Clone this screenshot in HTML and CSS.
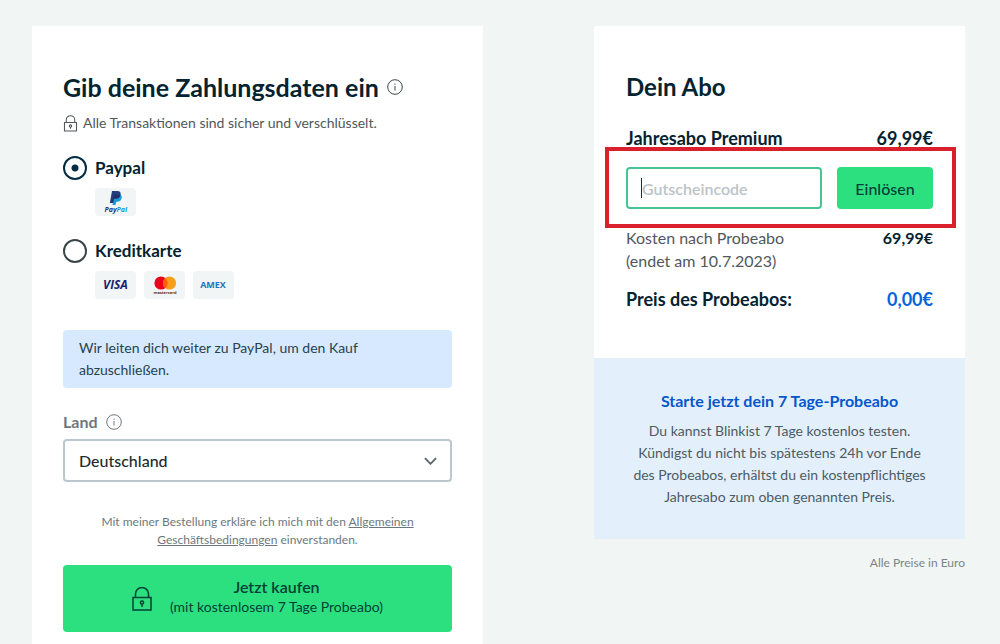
FILE: index.html
```html
<!DOCTYPE html>
<html lang="de">
<head>
<meta charset="utf-8">
<meta name="viewport" content="width=device-width, initial-scale=1">
<title>Zahlungsdaten</title>
<link rel="stylesheet" href="styles.css">
</head>
<body>
<main class="checkout">
  <form class="card payment">
    <h1 class="title title-main">Gib deine Zahlungsdaten ein
      <svg class="info" viewBox="0 0 16 16" aria-hidden="true"><circle cx="8" cy="8" r="7.3"/><path d="M8 7v4.5M8 4.6v1.2"/></svg>
    </h1>
    <p class="secure">
      <svg class="lock" viewBox="0 0 20 24" aria-hidden="true"><path d="M1.5 10.500h17v12h-17zM4 10.500V7a6 6 0 0 1 12 0v3.500"/><circle cx="10" cy="15.500" r="1.600"/><path d="M10 17v2.500"/></svg>
      Alle Transaktionen sind sicher und verschlüsselt.
    </p>

    <div class="method">
      <input class="radio" type="radio" name="method" id="paypal" checked>
      <label class="method-label" for="paypal">Paypal</label>
      <div class="badges">
        <span class="badge">
          <svg class="badge-art" viewBox="0 0 41 28" role="img" aria-label="PayPal">
            <path fill="#179bd7" d="M19 6.500h6.200c1.600.8 1.800 2.400 1.300 4-.6 2.200-2.100 3.200-4.200 3.200h-1l-.8 3.300h-3z"/>
            <path fill="#253b80" d="M17 3h5.200c2.800 0 4 1.500 3.300 4-.6 2.600-2.400 3.600-4.800 3.600h-1.800L17.900 15h-3.100z"/>
            <path fill="#222d65" d="M18.800 6.900h6.600c-.7 2.500-2.400 3.700-4.700 3.700h-1.800l-.9 4.400h-.8z"/>
            <text class="logo-paypal" x="9.500" y="23.500">Pay<tspan class="logo-pal">Pal</tspan></text>
          </svg>
        </span>
      </div>
    </div>

    <div class="method">
      <input class="radio" type="radio" name="method" id="card">
      <label class="method-label" for="card">Kreditkarte</label>
      <div class="badges">
        <span class="badge">
          <svg class="badge-art" viewBox="0 0 41 28" role="img" aria-label="Visa"><text class="logo-visa" x="20.500" y="18" text-anchor="middle">VISA</text></svg>
        </span>
        <span class="badge">
          <svg class="badge-art" viewBox="0 0 41 28" role="img" aria-label="Mastercard">
            <circle cx="17" cy="12" r="6.600" fill="#eb001b"/><circle cx="25.500" cy="12" r="6.600" fill="#f79e1b"/>
            <path fill="#ff5f00" d="M21.250 6.950a6.600 6.600 0 0 1 0 10.100a6.600 6.600 0 0 1 0-10.100z"/>
            <text class="logo-mc" x="21" y="22.500" text-anchor="middle">mastercard</text>
          </svg>
        </span>
        <span class="badge">
          <svg class="badge-art" viewBox="0 0 41 28" role="img" aria-label="American Express"><text class="logo-amex" x="20" y="17" text-anchor="middle">AMEX</text></svg>
        </span>
      </div>
    </div>

    <p class="notice">Wir leiten dich weiter zu PayPal, um den Kauf abzuschließen.</p>

    <div class="country-head">
      <label class="country-label" for="country">Land</label>
      <svg class="info info-muted" viewBox="0 0 16 16" aria-hidden="true"><circle cx="8" cy="8" r="7.3"/><path d="M8 7v4.500M8 4.600v1.200"/></svg>
    </div>
    <div class="select-wrap">
      <select class="select" id="country"><option>Deutschland</option></select>
      <svg class="chevron" viewBox="0 0 14 8" aria-hidden="true"><path d="M1 1l6 6 6-6"/></svg>
    </div>

    <p class="terms">Mit meiner Bestellung erkläre ich mich mit den <a class="terms-link" href="#agb">Allgemeinen Geschäftsbedingungen</a> einverstanden.</p>

    <button class="buy" type="button">
      <svg class="buy-lock" viewBox="0 0 20 24" aria-hidden="true"><path d="M1 10.500h18v12.500h-18zM3.500 10.500V7a6.500 6.500 0 0 1 13 0v3.500"/><circle cx="10" cy="15.500" r="1.600"/><path d="M10 17v3"/></svg>
      <span class="buy-text"><span class="buy-main">Jetzt kaufen</span><span class="buy-sub">(mit kostenlosem 7 Tage Probeabo)</span></span>
    </button>
  </form>

  <aside class="summary">
    <div class="summary-card">
      <section class="order">
        <h2 class="title">Dein Abo</h2>
        <div class="row row-strong"><span>Jahresabo Premium</span><span>69,99€</span></div>
        <form class="voucher">
          <div class="voucher-field"><input class="voucher-input" type="text" placeholder="Gutscheincode" aria-label="Gutscheincode"></div>
          <button class="redeem" type="button">Einlösen</button>
        </form>
        <div class="row row-cost"><span>Kosten nach Probeabo<br>(endet am 10.7.2023)</span><span class="cost">69,99€</span></div>
        <div class="row row-strong row-total"><span>Preis des Probeabos:</span><span class="total">0,00€</span></div>
      </section>
      <section class="trial">
        <h3 class="trial-title">Starte jetzt dein 7 Tage-Probeabo</h3>
        <p class="trial-text">Du kannst Blinkist 7 Tage kostenlos testen. Kündigst du nicht bis spätestens 24h vor Ende des Probeabos, erhältst du ein kostenpflichtiges Jahresabo zum oben genannten Preis.</p>
      </section>
    </div>
    <p class="currency">Alle Preise in Euro</p>
  </aside>
</main>
</body>
</html>
```
FILE: styles.css
```css
* { box-sizing: border-box; }
body {
  margin: 0;
  background: #f1f5f4;
  color: #042330;
  font-family: Lato, "Open Sans", sans-serif;
  font-size: 16px;
}
h1, h2, h3, p { margin: 0; }
button, input, select { font-family: inherit; margin: 0; }

.checkout {
  display: grid;
  grid-template-columns: 451fr 371fr;
  column-gap: 111px;
  align-items: start;
  min-height: 100vh;
  padding: 26px 35px 0 32px;
}
.card { background: #fff; align-self: stretch; padding: 45px 31px 12px; }

.title {
  display: flex;
  align-items: center;
  gap: 8px;
  font-size: 24px;
  line-height: 32px;
  font-weight: 700;
}
.title-main { font-size: 25px; }
.info { width: 16px; height: 16px; fill: none; stroke: #3a4649; stroke-width: 1; }
.info-muted { stroke: #6d787e; }

.secure {
  display: flex;
  align-items: center;
  gap: 5px;
  margin-top: 10px;
  color: #50585c;
  font-size: 14px;
  line-height: 20px;
}
.lock { width: 15px; height: 17px; fill: none; stroke: #50585c; stroke-width: 1.5; }

.method {
  display: grid;
  grid-template-columns: 24px 1fr;
  column-gap: 8px;
  row-gap: 8px;
  align-items: center;
  margin-top: 23px;
}
.radio {
  appearance: none;
  width: 24px;
  height: 24px;
  margin: 0;
  border: 2px solid #3a4649;
  border-radius: 50%;
}
.radio:checked {
  border-color: #032b41;
  background: radial-gradient(circle, #032b41 3px, transparent 4px);
}
.method-label { font-size: 17px; line-height: 24px; font-weight: 700; }
.badges { grid-column: 2; display: flex; gap: 8px; }
.badge { width: 41px; height: 28px; border-radius: 4px; background: #f1f5f5; }
.badge-art { display: block; width: 100%; height: 100%; }
.logo-paypal { font: italic 700 7px "Open Sans", sans-serif; fill: #253b80; }
.logo-pal { fill: #179bd7; }
.logo-visa { font: italic 700 12px "Open Sans", sans-serif; fill: #1a1f71; }
.logo-mc { font: 700 4px "Open Sans", sans-serif; fill: #4a3030; }
.logo-amex { font: 700 9px "Open Sans", sans-serif; fill: #1b74bb; }

.notice {
  margin-top: 31px;
  padding: 7px 16px;
  border-radius: 4px;
  background: #d7e9ff;
  color: #27424f;
  font-size: 14px;
  line-height: 22px;
}

.country-head { display: flex; align-items: center; gap: 8px; margin-top: 24px; }
.country-label { color: #6d787e; font-size: 16px; line-height: 20px; font-weight: 700; }
.select-wrap { position: relative; margin-top: 7px; }
.select {
  appearance: none;
  display: block;
  width: 100%;
  height: 43px;
  padding: 0 40px 0 14px;
  border: 2px solid #bac8ce;
  border-radius: 4px;
  background: #fff;
  color: #22292c;
  font-size: 16px;
  font-weight: 500;
}
.chevron {
  position: absolute;
  right: 15px;
  top: 18px;
  width: 13px;
  height: 8px;
  fill: none;
  stroke: #59656a;
  stroke-width: 2;
  pointer-events: none;
}

.terms {
  margin-top: 31px;
  padding: 0 24px;
  color: #6d787e;
  font-size: 12px;
  line-height: 18px;
  text-align: center;
}
.terms-link { color: inherit; }

.buy {
  display: flex;
  align-items: center;
  justify-content: center;
  gap: 18px;
  width: 100%;
  min-height: 67px;
  margin-top: 16px;
  padding: 10px 16px;
  border: 0;
  border-radius: 4px;
  background: #2ce080;
  color: #034036;
}
.buy-lock { width: 20px; height: 24px; fill: none; stroke: #034036; stroke-width: 1.5; }
.buy-text { display: flex; flex-direction: column; padding-bottom: 4px; line-height: 20px; }
.buy-main { font-size: 16px; font-weight: 600; }
.buy-sub { font-size: 14px; }

.summary-card { background: #fff; }
.order { padding: 45px 32px 47px; }
.row { display: flex; justify-content: space-between; gap: 16px; }
.row-strong { margin-top: 23px; font-size: 18px; line-height: 24px; font-weight: 700; }
.voucher {
  position: relative;
  display: grid;
  grid-template-columns: 1fr 96px;
  gap: 15px;
  margin-top: 17px;
}
/* Highlight frame around the voucher form */
.voucher::after {
  content: "";
  position: absolute;
  inset: -20px -23px -19px -21px;
  border: 4px solid #da1f2d;
  pointer-events: none;
}
.voucher-field { position: relative; }
.voucher-field::before {
  content: "";
  position: absolute;
  left: 15px;
  top: 11px;
  width: 1px;
  height: 20px;
  background: #22292c;
}
.voucher-input {
  display: block;
  width: 100%;
  height: 42px;
  padding: 0 14px;
  border: 2px solid #46c593;
  border-radius: 4px;
  background: #fff;
  font-size: 16px;
  font-weight: 600;
}
.voucher-input::placeholder { color: #bcc3c8; opacity: 1; }
.redeem {
  height: 42px;
  padding: 0;
  border: 0;
  border-radius: 4px;
  background: #2ce080;
  color: #034036;
  font-size: 16px;
  font-weight: 500;
}
.row-cost { margin-top: 17px; color: #50585c; line-height: 23px; }
.cost { color: #042330; font-weight: 700; }
.row-total { margin-top: 15px; }
.total { color: #0365dd; }

.trial { padding: 32px 32px 31px; background: #e3f0fb; text-align: center; }
.trial-title { color: #0656cc; font-size: 16px; line-height: 22px; font-weight: 700; }
.trial-text { margin-top: 8px; padding: 0 4px; color: #4c5b64; font-size: 14px; line-height: 22px; }
.currency { margin-top: 15px; color: #7b8588; font-size: 12px; line-height: 18px; text-align: right; }
```
